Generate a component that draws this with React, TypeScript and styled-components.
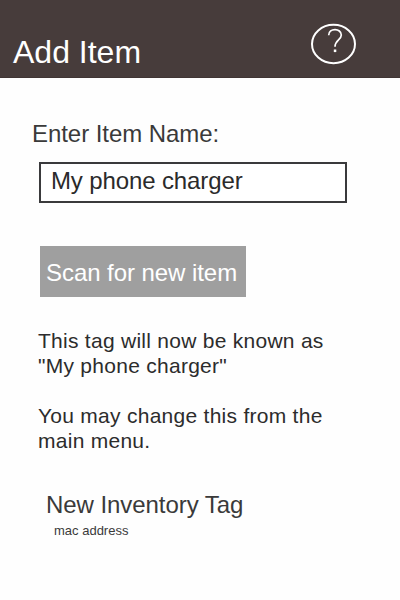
import React from 'react';
import styled, { createGlobalStyle } from 'styled-components';

const GlobalStyle = createGlobalStyle`
  * { box-sizing: border-box; }
  body { margin: 0; background: #fefefe; font-family: "Liberation Sans", Arial, sans-serif; }
`;

const Screen = styled.div`
  width: 400px;
  height: 600px;
  overflow: hidden;
  background: #fefefe;
  color: #3a3a3a;
`;

const Header = styled.header`
  display: flex;
  justify-content: space-between;
  height: 78px;
  padding: 22px 43px 0 13px;
  background: #473c3b;
  border-bottom: 1px solid #403534;
`;

const Title = styled.h1`
  margin: 12px 0 0;
  font-size: 32px;
  font-weight: 400;
  line-height: 36px;
  color: #fff;
`;

const HelpButton = styled.button`
  width: 47px;
  height: 44px;
  padding: 0;
  border: 0;
  background: none;
`;

const Content = styled.main`
  display: flex;
  flex-direction: column;
  align-items: flex-start;
  padding: 42px 32px 0;
`;

const Label = styled.label`
  font-size: 24px;
  line-height: 28px;
  letter-spacing: -0.06px;
`;

const NameInput = styled.input`
  width: 308px;
  height: 41px;
  margin: 14px 0 0 7px;
  padding: 0 10px 3px;
  border: 2px solid #3a3a3c;
  border-radius: 0;
  outline: 0;
  background: #fff;
  color: #2b2b2b;
  font: 24px "Liberation Sans", Arial, sans-serif;
  letter-spacing: -0.12px;
`;

const ScanButton = styled.button`
  width: 206px;
  height: 51px;
  margin: 43px 0 0 8px;
  padding: 2px 0 0 6px;
  border: 0;
  background: #9f9f9f;
  color: #fff;
  font: 24px "Liberation Sans", Arial, sans-serif;
  letter-spacing: -0.06px;
  text-align: left;
  white-space: nowrap;
`;

const Message = styled.p<{ $gap: number }>`
  margin: ${({ $gap }) => $gap}px 0 0 6px;
  font-size: 21px;
  line-height: 25px;
  letter-spacing: 0.27px;
  color: #2c2c2c;
  white-space: nowrap;
`;

const Tag = styled.section`
  margin: 38px 0 0 14px;
`;

const TagName = styled.h2`
  margin: 0;
  font-size: 24px;
  font-weight: 400;
  line-height: 28px;
  letter-spacing: -0.06px;
`;

const TagAddress = styled.p`
  margin: 4px 0 0 8px;
  font-size: 13px;
  line-height: 16px;
`;

export default function App() {
  return (
    <Screen>
      <GlobalStyle />
      <Header>
        <Title>Add Item</Title>
        <HelpButton aria-label="Help">
          <svg width="47" height="44" viewBox="0 0 47 44" fill="none" stroke="#fff" strokeWidth="2">
            <ellipse cx="23.5" cy="22" rx="21.5" ry="19.2" />
            <path d="M18.7 13.2C18.7 5.8 31.3 5.8 31.3 13C31.3 18 25 18 25 24.8" strokeWidth="1.7" />
            <path d="M23.8 28.8H26.3" strokeWidth="2.6" />
          </svg>
        </HelpButton>
      </Header>
      <Content>
        <Label htmlFor="name">Enter Item Name:</Label>
        <NameInput id="name" defaultValue="My phone charger" />
        <ScanButton>Scan for new item</ScanButton>
        <Message $gap={31}>This tag will now be known as<br />"My phone charger"</Message>
        <Message $gap={25}>You may change this from the<br />main menu.</Message>
        <Tag>
          <TagName>New Inventory Tag</TagName>
          <TagAddress>mac address</TagAddress>
        </Tag>
      </Content>
    </Screen>
  );
}
